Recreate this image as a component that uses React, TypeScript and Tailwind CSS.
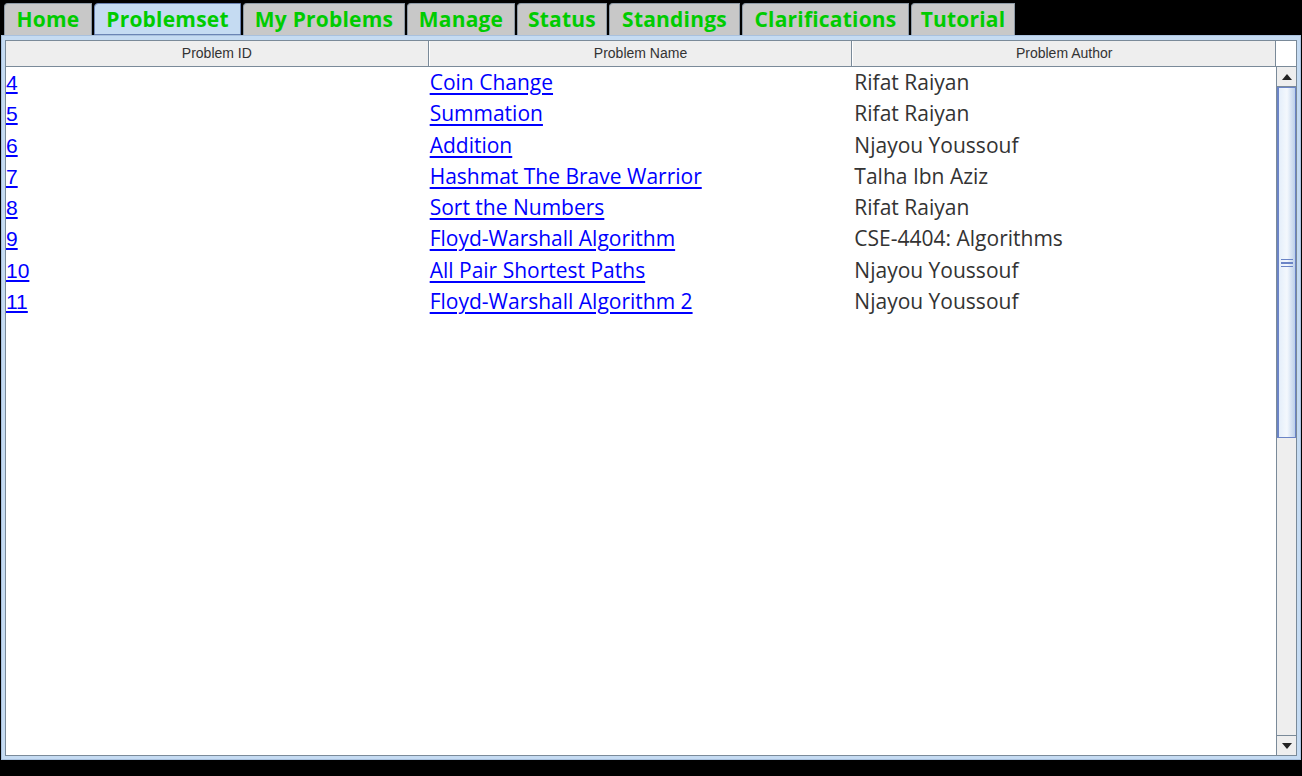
import React from "react";

const tabs = [
  { label: "Home", w: "w-[88px]" },
  { label: "Problemset", w: "w-[147px]", active: true },
  { label: "My Problems", w: "w-[162px]" },
  { label: "Manage", w: "w-[108px]" },
  { label: "Status", w: "w-[90px]" },
  { label: "Standings", w: "w-[131px]" },
  { label: "Clarifications", w: "w-[167px]" },
  { label: "Tutorial", w: "w-[104px]" },
];

const problems = [
  { id: "4", name: "Coin Change", author: "Rifat Raiyan" },
  { id: "5", name: "Summation", author: "Rifat Raiyan" },
  { id: "6", name: "Addition", author: "Njayou Youssouf" },
  { id: "7", name: "Hashmat The Brave Warrior", author: "Talha Ibn Aziz" },
  { id: "8", name: "Sort the Numbers", author: "Rifat Raiyan" },
  { id: "9", name: "Floyd-Warshall Algorithm", author: "CSE-4404: Algorithms" },
  { id: "10", name: "All Pair Shortest Paths", author: "Njayou Youssouf" },
  { id: "11", name: "Floyd-Warshall Algorithm 2", author: "Njayou Youssouf" },
];

const sans = "font-['Open_Sans',sans-serif]";
const arial = "font-['Liberation_Sans',Arial,sans-serif]";

export default function App() {
  return (
    <div className="w-[1302px] h-[776px] bg-black flex flex-col overflow-hidden">
      {/* Tabs */}
      <div className="flex items-end gap-[2px] pl-[4px] pt-[3px] h-[35px]">
        {tabs.map((t) => (
          <div
            key={t.label}
            className={`${t.w} h-[32px] flex items-center justify-center rounded-tl-[4px] border ${
              t.active
                ? "bg-[#c5dbf2] border-[#6b84b4]"
                : "bg-[#c8c8c8] border-[#8e9aa6] border-b-0"
            }`}
          >
            <span className={`${sans} font-bold text-[21px] tracking-[0.2px] text-[#00cc00] leading-none`}>
              {t.label}
            </span>
          </div>
        ))}
      </div>

      {/* Panel */}
      <div className="mx-[1px] h-[725px] bg-[#c5dbf2] border border-[#a9c1de] px-[3px] pt-[4px] pb-[3px]">
        <div className="h-full bg-white border border-[#7a8a99] flex">
          {/* Table */}
          <div className="flex-1 flex flex-col">
            <div className="h-[26px] flex bg-[#eeeeee] border-b border-[#7a8a99]">
              {["Problem ID", "Problem Name", "Problem Author"].map((h, i) => (
                <div
                  key={h}
                  className={`flex-1 flex items-center justify-center ${arial} text-[14px] text-[#333333] border-r border-[#7a8a99] ${
                    i > 0 ? "border-l border-l-white" : ""
                  }`}
                >
                  {h}
                </div>
              ))}
            </div>
            <div className="flex flex-col">
              {problems.map((p) => (
                <div key={p.id} className="h-[31.3px] flex items-center">
                  <div className="flex-1">
                    <a className={`${arial} text-[21px] text-[#0000ff] underline`}>{p.id}</a>
                  </div>
                  <div className="flex-1 pl-[2px]">
                    <a className={`${sans} text-[21px] text-[#0000ff] underline underline-offset-[3px]`}>
                      {p.name}
                    </a>
                  </div>
                  <div className={`flex-1 pl-[3px] ${sans} text-[21px] text-[#333333]`}>{p.author}</div>
                </div>
              ))}
            </div>
          </div>

          {/* Scrollbar */}
          <div className="w-[20px] flex flex-col">
            <div className="h-[26px] bg-white border-b border-[#7a8a99]" />
            <div className="flex-1 flex flex-col bg-[#eeeeee] border-l border-[#7a8a99]">
              <div className="h-[20px] bg-[#eeeeee] border-b border-[#7a8a99] flex items-center justify-center">
                <svg width="10" height="6" viewBox="0 0 10 6">
                  <path d="M0 6 L5 0 L10 6 Z" fill="#222" />
                </svg>
              </div>
              <div className="h-[351px] bg-gradient-to-r from-[#e4eefa] via-[#f4f8fd] to-[#bcd0ea] border border-[#6b84c6] border-l-2 flex items-center justify-center">
                <div className="flex flex-col gap-[2px]">
                  <div className="w-[12px] h-[1px] bg-[#6b84c6]" />
                  <div className="w-[12px] h-[2px] bg-[#6b84c6]" />
                  <div className="w-[12px] h-[1px] bg-[#6b84c6]" />
                </div>
              </div>
              <div className="flex-1" />
              <div className="h-[20px] bg-[#eeeeee] border-t border-[#7a8a99] flex items-center justify-center">
                <svg width="10" height="6" viewBox="0 0 10 6">
                  <path d="M0 0 L10 0 L5 6 Z" fill="#222" />
                </svg>
              </div>
            </div>
          </div>
        </div>
      </div>
    </div>
  );
}
